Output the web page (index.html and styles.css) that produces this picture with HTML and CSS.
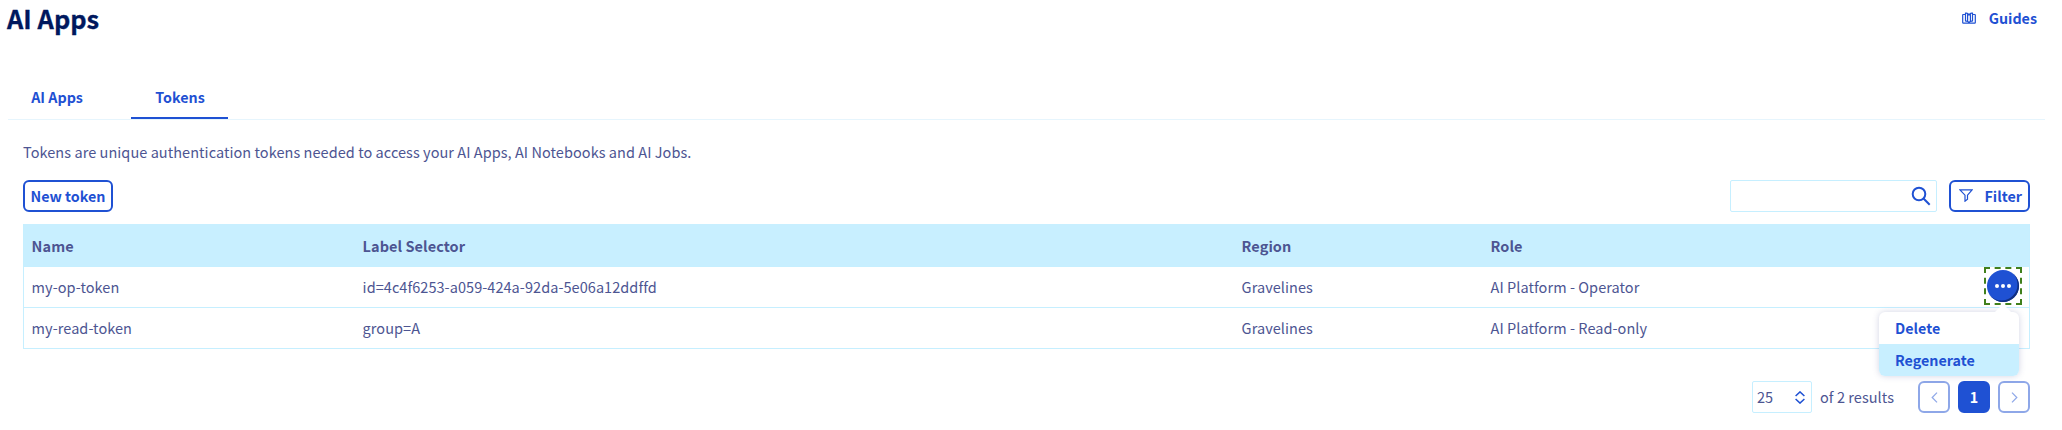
FILE: index.html
```html
<!DOCTYPE html>
<html lang="en">
<head>
<meta charset="utf-8">
<title>AI Apps</title>
<link rel="stylesheet" href="styles.css">
</head>
<body>
<header class="page-header">
  <h1 class="title">AI Apps</h1>
  <a class="guides">
    <svg width="14" height="12" viewBox="0 0 14 12" fill="none" stroke="currentColor" stroke-width="1.200"><path d="M3.500 2.500H1.200Q.7 2.500.7 3v7.500q0 .6.600.6h11.400q.6 0 .6-.6V3q0-.5-.5-.5H10.500M3.500 9.300V1.200C5 .8 6.300 1.600 7 3 7.700 1.600 9 .8 10.500 1.200v8.100M3.500 9.300C5 9 6.300 9.500 7 10.600 7.700 9.500 9 9 10.500 9.300M5.600 2v7.300M8.400 2v7.300"/></svg>
    <span>Guides</span>
  </a>
</header>
<nav class="tabs">
  <a class="tab">AI Apps</a>
  <a class="tab tab-active">Tokens</a>
</nav>
<main class="content">
  <p class="description">Tokens are unique authentication tokens needed to access your AI Apps, AI Notebooks and AI Jobs.</p>
  <div class="toolbar">
    <button class="btn btn-new">New token</button>
    <div class="tools">
      <div class="search">
        <svg width="20" height="20" viewBox="0 0 20 20" fill="none" stroke="currentColor" stroke-width="2"><circle cx="8" cy="8" r="6.300"/><path d="M12.500 12.500 18.700 18.700"/></svg>
      </div>
      <button class="btn btn-filter">
        <svg width="14" height="13" viewBox="0 0 14 13" fill="none" stroke="currentColor" stroke-width="1.200"><path d="M.9.8h12.200L8.500 6.200v4L6 12.200v-6z"/></svg>
        <span>Filter</span>
      </button>
    </div>
  </div>
  <div class="table">
    <div class="row row-head">
      <span>Name</span><span>Label Selector</span><span>Region</span><span>Role</span><span></span>
    </div>
    <div class="row">
      <span>my-op-token</span><span>id=4c4f6253-a059-424a-92da-5e06a12ddffd</span><span>Gravelines</span><span>AI Platform - Operator</span>
      <div class="actions">
        <button class="more"><span class="more-face"><i class="dot"></i><i class="dot"></i><i class="dot"></i></span></button>
        <div class="menu">
          <a class="menu-item">Delete</a>
          <a class="menu-item menu-item-active">Regenerate</a>
        </div>
      </div>
    </div>
    <div class="row">
      <span>my-read-token</span><span>group=A</span><span>Gravelines</span><span>AI Platform - Read-only</span><span></span>
    </div>
  </div>
  <footer class="pagination">
    <div class="page-size"><span>25</span>
      <svg width="10" height="13" viewBox="0 0 10 13" fill="none" stroke="currentColor" stroke-width="1.500"><path d="M.6 5 5 .9 9.400 5M.6 8 5 12.100 9.400 8"/></svg>
    </div>
    <span class="results">of 2 results</span>
    <div class="pages">
      <button class="page page-disabled"><svg width="7" height="11" viewBox="0 0 7 11" fill="none" stroke="currentColor" stroke-width="1.200"><path d="M6 .7 1.200 5.500 6 10.300"/></svg></button>
      <button class="page page-current">1</button>
      <button class="page page-disabled"><svg width="7" height="11" viewBox="0 0 7 11" fill="none" stroke="currentColor" stroke-width="1.200"><path d="M1 .7 5.800 5.500 1 10.300"/></svg></button>
    </div>
  </footer>
</main>
</body>
</html>
```
FILE: styles.css
```css
* { box-sizing: border-box; }
body {
  margin: 0;
  width: 2062px;
  height: 430px;
  overflow: hidden;
  background: #fff;
  color: #4d5592;
  font: 14.5px/20px "Noto Sans CJK JP", "Noto Sans", sans-serif;
  letter-spacing: .055px;
}
button { font: inherit; letter-spacing: inherit; margin: 0; padding: 0; background: #fff; }
a, button { color: #1f51d3; font-size: 14.3px; font-weight: 700; letter-spacing: 0; }
svg { display: block; }
.page-header {
  display: flex;
  justify-content: space-between;
  height: 80px;
  padding: 0 25px 0 7px;
}
.title { margin: 0; color: #00185e; font-size: 25.4px; line-height: 36px; font-weight: 700; -webkit-text-stroke: .3px #00185e; }
.guides { display: flex; align-items: center; gap: 13px; height: 36px; }
.tabs {
  display: flex;
  height: 40px;
  margin: 0 17px 0 8px;
  border-bottom: 1px solid #e6f5fd;
  gap: 26px;
}
.tab { width: 97px; height: 39px; padding: 7px 0 0 1px; text-align: center; }
.tab-active { border-bottom: 2px solid #1f51d3; }
.content { padding: 0 32px 0 23px; }
.description { margin: 0; padding-top: 22px; height: 60px; }
.toolbar { display: flex; justify-content: space-between; height: 32px; }
.btn { height: 32px; border: 2px solid #1f51d3; border-radius: 6px; }
.btn-new { width: 90px; }
.tools { display: flex; gap: 12px; }
.search {
  display: flex;
  align-items: center;
  justify-content: flex-end;
  width: 207px;
  padding-right: 5px;
  border: 1px solid #c6efff;
  border-radius: 2px;
  color: #1f51d3;
}
.btn-filter { display: flex; align-items: center; justify-content: space-between; width: 81px; padding: 0 6px 0 8px; }
.btn-filter svg { margin-top: -2px; }
.table { margin-top: 12px; border: 1px solid #c6efff; border-top: 0; }
.row {
  display: grid;
  grid-template-columns: 331px 879px 249px 1fr auto;
  align-items: center;
  height: 41px;
  padding: 0 7px 0 7.600px;
  border-bottom: 1px solid #c6efff;
}
.row:last-child { border-bottom: 0; height: 40px; }
.row-head { height: 43px; background: #c8efff; font-weight: 700; padding-top: 2px; }
.actions { position: relative; height: 40px; }
.more {
  display: block;
  width: 38px;
  height: 38px;
  padding: 3px;
  border: 0;
  background: none;
  outline: 2px dashed #41801c;
  outline-offset: -2px;
}
.more-face {
  display: flex;
  align-items: center;
  justify-content: center;
  gap: 2px;
  height: 32px;
  border-radius: 50%;
  background: #1f51d3;
  box-shadow: inset -1.500px -1.500px 0 #112f80;
}
.dot { width: 4px; height: 4px; border-radius: 50%; background: #fff; }
.menu {
  position: absolute;
  z-index: 2;
  top: 45px;
  right: 3px;
  width: 140px;
  border-radius: 6px;
  background: #fff;
  box-shadow: 0 0 6px rgba(77, 85, 146, .25);
}
.menu::before {
  content: "";
  position: absolute;
  top: -8px;
  right: 8px;
  border: 8px solid transparent;
  border-top: 0;
  border-bottom-color: #fff;
}
.menu-item { display: flex; align-items: center; height: 32px; padding: 0 16px; }
.menu-item-active { background: #c8efff; border-radius: 0 0 6px 6px; }
.pagination { display: flex; justify-content: flex-end; align-items: center; height: 32px; margin-top: 32px; }
.page-size {
  display: flex;
  align-items: center;
  justify-content: space-between;
  width: 60px;
  height: 32px;
  padding: 0 6px 0 4px;
  border: 1px solid #c6efff;
  border-radius: 2px;
}
.page-size svg { color: #1f51d3; }
.results { width: 98px; margin-left: 8px; }
.pages { display: flex; gap: 8px; }
.page { display: flex; align-items: center; justify-content: center; width: 32px; height: 32px; border: 2px solid #1f51d3; border-radius: 6px; }
.page-disabled { opacity: .5; }
.page-current { background: #1f51d3; color: #fff; }
```
